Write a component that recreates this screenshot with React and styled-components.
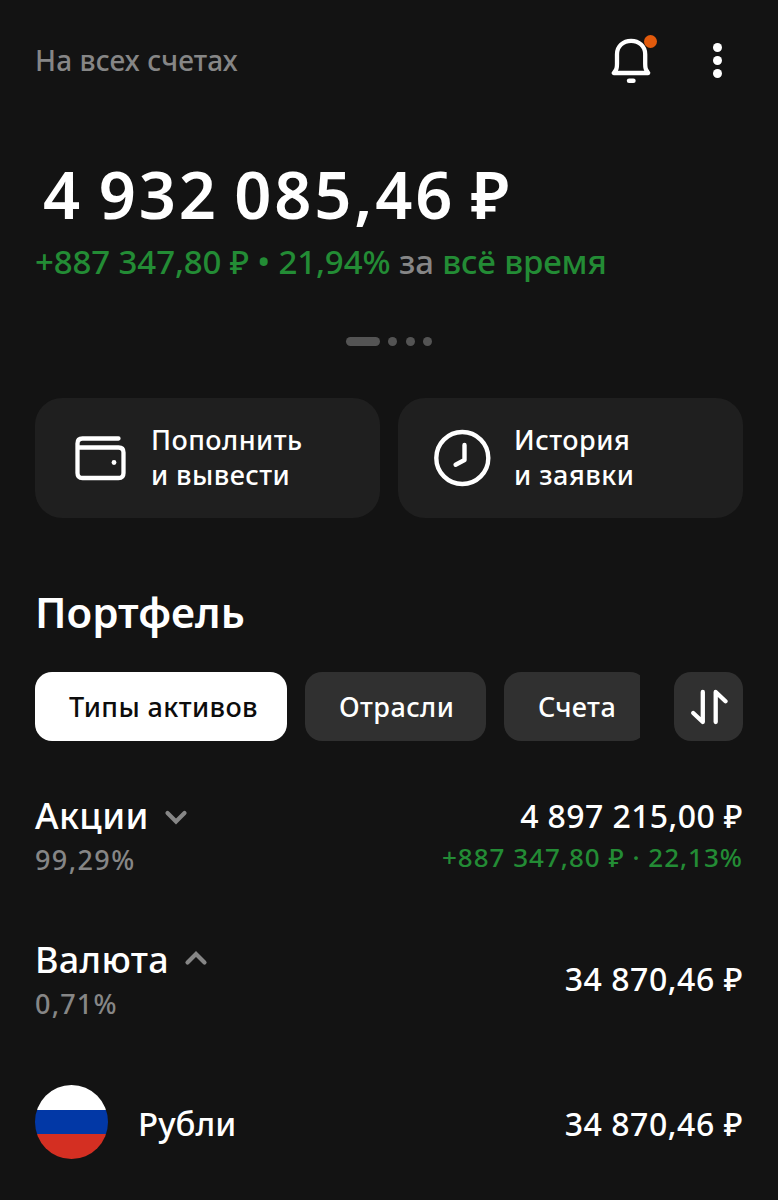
import styled, { createGlobalStyle } from "styled-components";

const tabs = [
  { title: "Типы активов", width: 252, active: true },
  { title: "Отрасли", width: 181 },
  { title: "Счета", width: 143 },
];

function Header() {
  return (
    <Top>
      <Text size={28} weight={490} spacing={0.1} color="#868686">На всех счетах</Text>
      <Actions>
        <Bell>
          <svg width="42" height="48" viewBox="0 0 42 48" fill="none" stroke="#fff" strokeWidth="4.3" strokeLinecap="round" strokeLinejoin="round">
            <path d="M2.8 37H37.2C34.5 33.4 34.200 32.200 34.200 27.700V18.200C34.200 10.200 28 4.800 20.100 4.800S6 10.200 6 18.200V27.700c0 4.500-.4 5.700-3.200 9.300Z" />
            <path d="M18.100 44.700h4.300" strokeWidth="4.6" />
          </svg>
          <Badge />
        </Bell>
        <Dots>
          <i />
          <i />
          <i />
        </Dots>
      </Actions>
    </Top>
  );
}

function Wallet() {
  return (
    <svg width="52" height="46" viewBox="0 0 52 46" fill="none" stroke="#fff" strokeWidth="4.3" strokeLinecap="round">
      <path d="M44.5 3.5H8.5Q3.5 3.5 3.5 8.5V38Q3.5 43 8.5 43H44.5Q49.5 43 49.5 38V17.5Q49.5 12.500 44.500 12.500H4.500" />
      <circle cx="40" cy="27.5" r="2.4" fill="#fff" stroke="none" />
    </svg>
  );
}

function Clock() {
  return (
    <svg width="58" height="58" viewBox="0 0 58 58" fill="none" stroke="#fff" strokeWidth="4.4" strokeLinecap="round" strokeLinejoin="round">
      <circle cx="28.3" cy="29" r="26" />
      <path d="M30.5 16V31L21.6 35.7" />
    </svg>
  );
}

function Chevron({ up }) {
  return (
    <svg width="24" height="20" viewBox="0 0 24 20" fill="none" stroke="#868686" strokeWidth="4.2" strokeLinecap="round">
      <path d={up ? "M3.5 12.5 12 4 20.5 12.5" : "M3.5 7 12 15.5 20.5 7"} />
    </svg>
  );
}

function App() {
  return (
    <Page>
      <GlobalStyle />
      <Header />

      <Summary>
        <Balance size={65} line={80} weight={600} spacing={2.8}>4 932 085,46 ₽</Balance>
        <Text size={33} line={44} weight={490} spacing={-0.1} color="#238c35">
          +887 347,80 ₽ • 21,94% <Muted>за</Muted> всё время
        </Text>
      </Summary>

      <Pager>
        <b />
        <i />
        <i />
        <i />
      </Pager>

      <Cards>
        <Card>
          <CardIcon>
            <Wallet />
          </CardIcon>
          <CardText size={27} line={35} weight={500} spacing={0.45}>Пополнить<br />и вывести</CardText>
        </Card>
        <Card>
          <CardIcon>
            <Clock />
          </CardIcon>
          <CardText size={27} line={35} weight={500} spacing={0.5}>История<br />и заявки</CardText>
        </Card>
      </Cards>

      <Title size={42} line={56} weight={600}>Портфель</Title>

      <Filters>
        <Tabs>
          {tabs.map((tab) => (
            <Tab key={tab.title} $active={tab.active} $width={tab.width}>
              {tab.title}
            </Tab>
          ))}
        </Tabs>
        <Sort>
          <svg width="38" height="38" viewBox="0 0 38 38" fill="none" stroke="#fff" strokeWidth="4.3" strokeLinecap="round" strokeLinejoin="round">
            <path d="M12.8 4V34L3.2 25" />
            <path d="M25.7 34V4L35.5 13.3" />
          </svg>
        </Sort>
      </Filters>

      <Group>
        <div>
          <Name>
            <Text size={36} line={44} weight={500} spacing={0.4}>Акции</Text>
            <Chevron />
          </Name>
          <Percent size={27} line={36} weight={480} spacing={1.4} color="#868686">99,29%</Percent>
        </div>
        <Amounts>
          <Text size={32} line={44} weight={500} spacing={0.4}>4 897 215,00 ₽</Text>
          <Profit size={26} line={36} weight={480} spacing={1} color="#238c35">+887 347,80 ₽ · 22,13%</Profit>
        </Amounts>
      </Group>

      <Group>
        <div>
          <Name>
            <Text size={36} line={44} weight={500} spacing={0.3}>Валюта</Text>
            <Chevron up />
          </Name>
          <Percent size={27} line={36} weight={480} spacing={1.2} color="#868686">0,71%</Percent>
        </div>
        <Total size={32} line={44} weight={500} spacing={0.55}>34 870,46 ₽</Total>
      </Group>

      <Currency>
        <Flag />
        <Label size={33} line={44} weight={500}>Рубли</Label>
        <Right size={32} line={44} weight={500} spacing={0.55}>34 870,46 ₽</Right>
      </Currency>
    </Page>
  );
}

export default App;

const GlobalStyle = createGlobalStyle`
  body {
    margin: 0;
    background: #131313;
  }
`;

const Page = styled.div`
  width: 778px;
  height: 1200px;
  box-sizing: border-box;
  padding: 0 35px;
  overflow: hidden;
  background: #131313;
  color: #fff;
  font-family: "Noto Sans", sans-serif;
`;

const Text = styled.div.withConfig({
  shouldForwardProp: (prop) => !["size", "line", "weight", "spacing", "color"].includes(prop),
})`
  font-size: ${(p) => p.size}px;
  line-height: ${(p) => p.line || 40}px;
  font-weight: ${(p) => p.weight || 400};
  letter-spacing: ${(p) => p.spacing || 0}px;
  color: ${(p) => p.color || "#fff"};
  white-space: nowrap;
`;

const Top = styled.header`
  display: flex;
  align-items: center;
  justify-content: space-between;
  height: 120px;
`;

const Actions = styled.div`
  display: flex;
  align-items: center;
  gap: 60px;
  padding-right: 21px;
`;

const Bell = styled.div`
  position: relative;
  width: 42px;
  height: 48px;
`;

const Badge = styled.span`
  position: absolute;
  top: -1.5px;
  right: -4px;
  width: 13px;
  height: 13px;
  border-radius: 50%;
  background: #e25a0c;
`;

const Dots = styled.div`
  display: flex;
  flex-direction: column;
  gap: 4px;

  i {
    width: 9px;
    height: 9px;
    border-radius: 50%;
    background: #fff;
  }
`;

const Summary = styled.section`
  padding-top: 34px;
`;

const Balance = styled(Text)`
  padding-left: 8px;
  margin-bottom: 6px;
  word-spacing: -4px;
`;

const Muted = styled.span`
  color: #868686;
`;

const Pager = styled.div`
  display: flex;
  justify-content: center;
  gap: 8.5px;
  margin-top: 53px;

  b {
    width: 34px;
    height: 9px;
    border-radius: 5px;
    background: #545454;
  }

  i {
    width: 9px;
    height: 9px;
    border-radius: 50%;
    background: #545454;
  }
`;

const Cards = styled.section`
  display: grid;
  grid-template-columns: 1fr 1fr;
  gap: 18px;
  margin-top: 51.5px;
`;

const Card = styled.div`
  display: flex;
  align-items: center;
  height: 120.5px;
  border-radius: 27px;
  background: #1f1f1f;
`;

const CardIcon = styled.div`
  display: flex;
  justify-content: center;
  width: 60px;
  margin: 0 21px 0 35px;
`;

const CardText = styled(Text)`
  padding-bottom: 2px;
`;

const Title = styled(Text)`
  margin-top: 66px;
`;

const Filters = styled.div`
  display: flex;
  justify-content: space-between;
  margin-top: 32px;
`;

const Tabs = styled.div`
  display: flex;
  gap: 18px;
  width: 605px;
  overflow: hidden;
`;

const Tab = styled.div`
  flex: none;
  box-sizing: border-box;
  width: ${(p) => p.$width}px;
  height: 69px;
  padding-left: 34px;
  border-radius: 17px;
  background: ${(p) => (p.$active ? "#fff" : "#303030")};
  color: ${(p) => (p.$active ? "#0c0c0c" : "#fff")};
  font-size: 27px;
  font-weight: 500;
  line-height: 69px;
  letter-spacing: 0.4px;
`;

const Sort = styled.div`
  display: flex;
  align-items: center;
  justify-content: center;
  width: 69px;
  height: 69px;
  border-radius: 17px;
  background: #303030;
`;

const Group = styled.section`
  display: flex;
  align-items: center;
  justify-content: space-between;
  height: 84px;
  margin-top: 53px;

  & + & {
    margin-top: 60px;
  }
`;

const Name = styled.div`
  display: flex;
  align-items: center;
  gap: 15px;
`;

const Percent = styled(Text)`
  margin-top: 4px;
`;

const Amounts = styled.div`
  display: flex;
  flex-direction: column;
  align-items: flex-end;
`;

const Profit = styled(Text)`
  margin: 1px 0 3px;
`;

const Total = styled(Text)`
  padding-bottom: 2px;
`;

const Currency = styled.div`
  display: flex;
  align-items: center;
  gap: 30px;
  margin-top: 63px;
`;

const Flag = styled.div`
  width: 73px;
  height: 74px;
  border-radius: 50%;
  background: linear-gradient(#fff 0 33.5%, #0238a6 33.5% 66.5%, #d42f22 66.5%);
`;

const Label = styled(Text)`
  padding-top: 4px;
`;

const Right = styled(Label)`
  margin-left: auto;
`;
